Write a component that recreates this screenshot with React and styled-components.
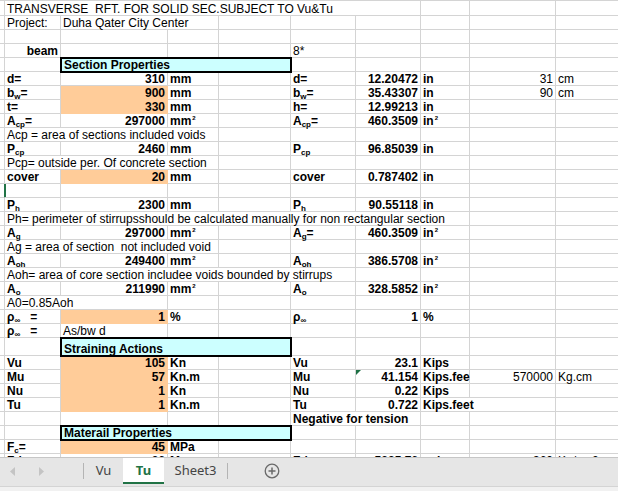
import React from "react";
import styled, { createGlobalStyle } from "styled-components";

const GRID = "#d4d4d4";
const ORANGE = "#ffcc99";
const CYAN = "#ccffff";
const COLS = "5px 56px 107px 51px 72px 65px 65px 49px 86px 63px";

const GlobalStyle = createGlobalStyle`
  html, body {
    margin: 0;
    padding: 0;
    background: #fff;
    overflow: hidden;
  }
  body {
    font-family: "Liberation Sans", Arial, sans-serif;
  }
`;

const Window = styled.div`
  width: 618px;
  height: 491px;
  display: flex;
  flex-direction: column;
  overflow: hidden;
`;

const Sheet = styled.div`
  height: 457px;
  flex-shrink: 0;
  box-sizing: border-box;
  border-top: 1px solid ${GRID};
  overflow: hidden;
`;

const Row = styled.div`
  display: grid;
  grid-template-columns: ${COLS};
  height: ${(p) => p.$h}px;
`;

const Cell = styled.div`
  grid-column: span ${(p) => p.$span};
  box-sizing: border-box;
  position: relative;
  display: flex;
  align-items: flex-end;
  justify-content: ${(p) => (p.$right ? "flex-end" : "flex-start")};
  padding: 0 2px;
  background: ${(p) => p.$fill || "transparent"};
  border-right: ${(p) => (p.$sel ? "2px solid #217346" : `1px solid ${p.$fill || GRID}`)};
  border-bottom: 1px solid ${(p) => p.$fill || GRID};
  color: #000;
  font-size: 12px;
  font-weight: ${(p) => (p.$bold ? 700 : 400)};
  white-space: pre;
  min-width: 0;

  ${(p) =>
    p.$flag &&
    `&::before {
      content: "";
      position: absolute;
      top: 0;
      left: 0;
      border-top: 5px solid #1e7145;
      border-right: 5px solid transparent;
    }`}
`;

const TitleCell = styled(Cell)`
  background: ${CYAN};
  border-color: ${CYAN};
  outline: 2px solid #000;
  outline-offset: -1px;
  z-index: 1;
  padding-left: 3px;
  font-weight: 700;
`;

const Text = styled.span`
  display: block;
  line-height: 14px;
  margin-bottom: -1px;
`;

const Sub = styled.span`
  font-size: 8px;
  line-height: 0;
  position: relative;
  top: 2px;
`;

const Sup = styled.span`
  font-size: 6px;
  line-height: 0;
  position: relative;
  top: -5px;
  margin-left: 1px;
`;

const TabBar = styled.div`
  flex: 1;
  display: flex;
  flex-direction: column;
  background: #e6e6e6;
  border-top: 1px solid #c6c6c6;
`;

const TabStrip = styled.div`
  height: 26px;
  display: flex;
  align-items: stretch;
`;

const Nav = styled.div`
  width: 83px;
  display: flex;
  align-items: center;
  gap: 22px;
  padding-left: 10px;
  box-sizing: border-box;
`;

const Divider = styled.div`
  width: 1px;
  margin: 5px 0 5px;
  background: #b4b4b4;
`;

const Tab = styled.div`
  width: ${(p) => p.$w}px;
  display: flex;
  align-items: center;
  justify-content: center;
  box-sizing: border-box;
  font-family: "Noto Sans", "Open Sans", sans-serif;
  font-size: 13px;
  color: ${(p) => (p.$active ? "#217346" : "#444")};
  font-weight: ${(p) => (p.$active ? 700 : 400)};
  background: ${(p) => (p.$active ? "#fff" : "transparent")};
  border-bottom: 2px solid ${(p) => (p.$active ? "#217346" : "transparent")};
`;

const AddSheet = styled.div`
  display: flex;
  align-items: center;
  padding-left: 36px;
`;

const StatusEdge = styled.div`
  margin-top: 2px;
  flex: 1;
  border-top: 1px solid #d4d4d4;
  background: #f1f1f1;
`;

const sub = (base, s, tail = "") => (
  <>
    {base}
    <Sub>{s}</Sub>
    {tail}
  </>
);
const sq = (u) => (
  <>
    {u}
    <Sup>2</Sup>
  </>
);
const rho = (eq) => (
  <>
    ρ<Sub>∞</Sub>
    {eq ? "   =" : ""}
  </>
);

// c = column index (0 = sliver, 1 = A ... 9 = I)
const L = (c, t, o = {}) => ({ c, t, ...o });
const B = { b: true };
const BR = { b: true, r: true };
const BRO = { b: true, r: true, f: ORANGE };

const pair = (la, lv, lu, ra, rv, ru, lo = BR) => [
  L(1, la, B),
  L(2, lv, lo),
  L(3, lu, B),
  L(5, ra, B),
  L(6, rv, BR),
  L(7, ru, B),
];

const rows = [
  { h: 15, cells: [L(1, "TRANSVERSE  RFT. FOR SOLID SEC.SUBJECT TO Vu&Tu", { s: 6 })] },
  { cells: [L(1, "Project:"), L(2, "Duha Qater City Center", { s: 2 })] },
  { cells: [] },
  { cells: [L(1, "beam", BR), L(5, "8*")] },
  { cells: [L(2, "Section Properties", { s: 3, box: true })] },
  {
    cells: [
      ...pair("d=", "310", "mm", "d=", "12.20472", "in"),
      L(8, "31", { r: true }),
      L(9, "cm"),
    ],
  },
  {
    cells: [
      ...pair(sub("b", "w", "="), "900", "mm", sub("b", "w", "="), "35.43307", "in", BRO),
      L(8, "90", { r: true }),
      L(9, "cm"),
    ],
  },
  { cells: pair("t=", "330", "mm", "h=", "12.99213", "in", BRO) },
  { cells: pair(sub("A", "cp", "="), "297000", sq("mm"), sub("A", "cp", "="), "460.3509", sq("in")) },
  { cells: [L(1, "Acp = area of sections included voids", { s: 3 })] },
  { cells: pair(sub("P", "cp"), "2460", "mm", sub("P", "cp"), "96.85039", "in") },
  { cells: [L(1, "Pcp= outside per. Of concrete section", { s: 3 })] },
  { cells: pair("cover", "20", "mm", "cover", "0.787402", "in", BRO) },
  { cells: [L(0, "", { sel: true })] },
  { cells: pair(sub("P", "h"), "2300", "mm", sub("P", "h"), "90.55118", "in") },
  {
    cells: [
      L(1, "Ph= perimeter of stirrupsshould be calculated manually for non rectangular section", { s: 7 }),
    ],
  },
  { cells: pair(sub("A", "g"), "297000", sq("mm"), sub("A", "g", "="), "460.3509", sq("in")) },
  { cells: [L(1, "Ag = area of section  not included void", { s: 3 })] },
  { cells: pair(sub("A", "oh"), "249400", sq("mm"), sub("A", "oh"), "386.5708", sq("in")) },
  { cells: [L(1, "Aoh= area of core section includee voids bounded by stirrups", { s: 5 })] },
  { cells: pair(sub("A", "o"), "211990", sq("mm"), sub("A", "o"), "328.5852", sq("in")) },
  { cells: [L(1, "A0=0.85Aoh", { s: 2 })] },
  { cells: pair(rho(true), "1", "%", rho(false), "1", "%", BRO) },
  { cells: [L(1, rho(true), B), L(2, "As/bw d")] },
  { h: 18, cells: [L(2, "Straining Actions", { s: 3, box: true })] },
  { cells: pair("Vu", "105", "Kn", "Vu", "23.1", "Kips", BRO) },
  {
    cells: [
      L(1, "Mu", B),
      L(2, "57", BRO),
      L(3, "Kn.m", B),
      L(5, "Mu", B),
      L(6, "41.154", { ...BR, flag: true }),
      L(7, "Kips.fee", B),
      L(8, "570000", { r: true }),
      L(9, "Kg.cm"),
    ],
  },
  { cells: pair("Nu", "1", "Kn", "Nu", "0.22", "Kips", BRO) },
  {
    cells: [
      L(1, "Tu", B),
      L(2, "1", BRO),
      L(3, "Kn.m", B),
      L(5, "Tu", B),
      L(6, "0.722", BR),
      L(7, "Kips.feet", { b: true, s: 2 }),
    ],
  },
  { cells: [L(5, "Negative for tension", { b: true, s: 2 })] },
  { cells: [L(2, "Materail Properties", { s: 3, box: true })] },
  { cells: [L(1, sub("F", "c", "="), B), L(2, "45", BRO), L(3, "MPa", B)] },
  {
    cells: [
      ...pair(sub("F", "c", "'="), "36", "Mpa", sub("F", "c", "'="), "5225.76", "psi"),
      L(8, "360", { r: true }),
      L(9, "Kg/cm2"),
    ],
  },
];

const renderCells = (cells) => {
  const byCol = {};
  cells.forEach((c) => (byCol[c.c] = c));
  const out = [];
  let col = 0;
  while (col < 10) {
    const c = byCol[col];
    if (!c) {
      out.push(<Cell key={col} $span={1} />);
      col += 1;
      continue;
    }
    const span = c.s || 1;
    const Comp = c.box ? TitleCell : Cell;
    out.push(
      <Comp
        key={col}
        $span={span}
        $bold={c.b}
        $right={c.r}
        $fill={c.f}
        $flag={c.flag}
        $sel={c.sel}
      >
        <Text>{c.t}</Text>
      </Comp>
    );
    col += span;
  }
  return out;
};

const Arrow = ({ left }) => (
  <svg width="6" height="9" viewBox="0 0 6 9">
    <path d={left ? "M5 0 L0 4.5 L5 9 Z" : "M1 0 L6 4.5 L1 9 Z"} fill="#c4c4c4" />
  </svg>
);

const PlusCircle = () => (
  <svg width="16" height="16" viewBox="0 0 16 16">
    <circle cx="8" cy="8" r="6.8" fill="none" stroke="#6a6a6a" strokeWidth="1.3" />
    <path d="M8 4.5 V11.5 M4.5 8 H11.5" stroke="#6a6a6a" strokeWidth="1.5" />
  </svg>
);

export default function App() {
  return (
    <Window>
      <GlobalStyle />
      <Sheet>
        {rows.map((r, i) => (
          <Row key={i} $h={r.h || 14}>
            {renderCells(r.cells)}
          </Row>
        ))}
      </Sheet>
      <TabBar>
        <TabStrip>
          <Nav>
            <Arrow left />
            <Arrow />
          </Nav>
          <Divider />
          <Tab $w={39}>Vu</Tab>
          <Tab $w={41} $active>
            Tu
          </Tab>
          <Tab $w={63}>Sheet3</Tab>
          <Divider />
          <AddSheet>
            <PlusCircle />
          </AddSheet>
        </TabStrip>
        <StatusEdge />
      </TabBar>
    </Window>
  );
}
